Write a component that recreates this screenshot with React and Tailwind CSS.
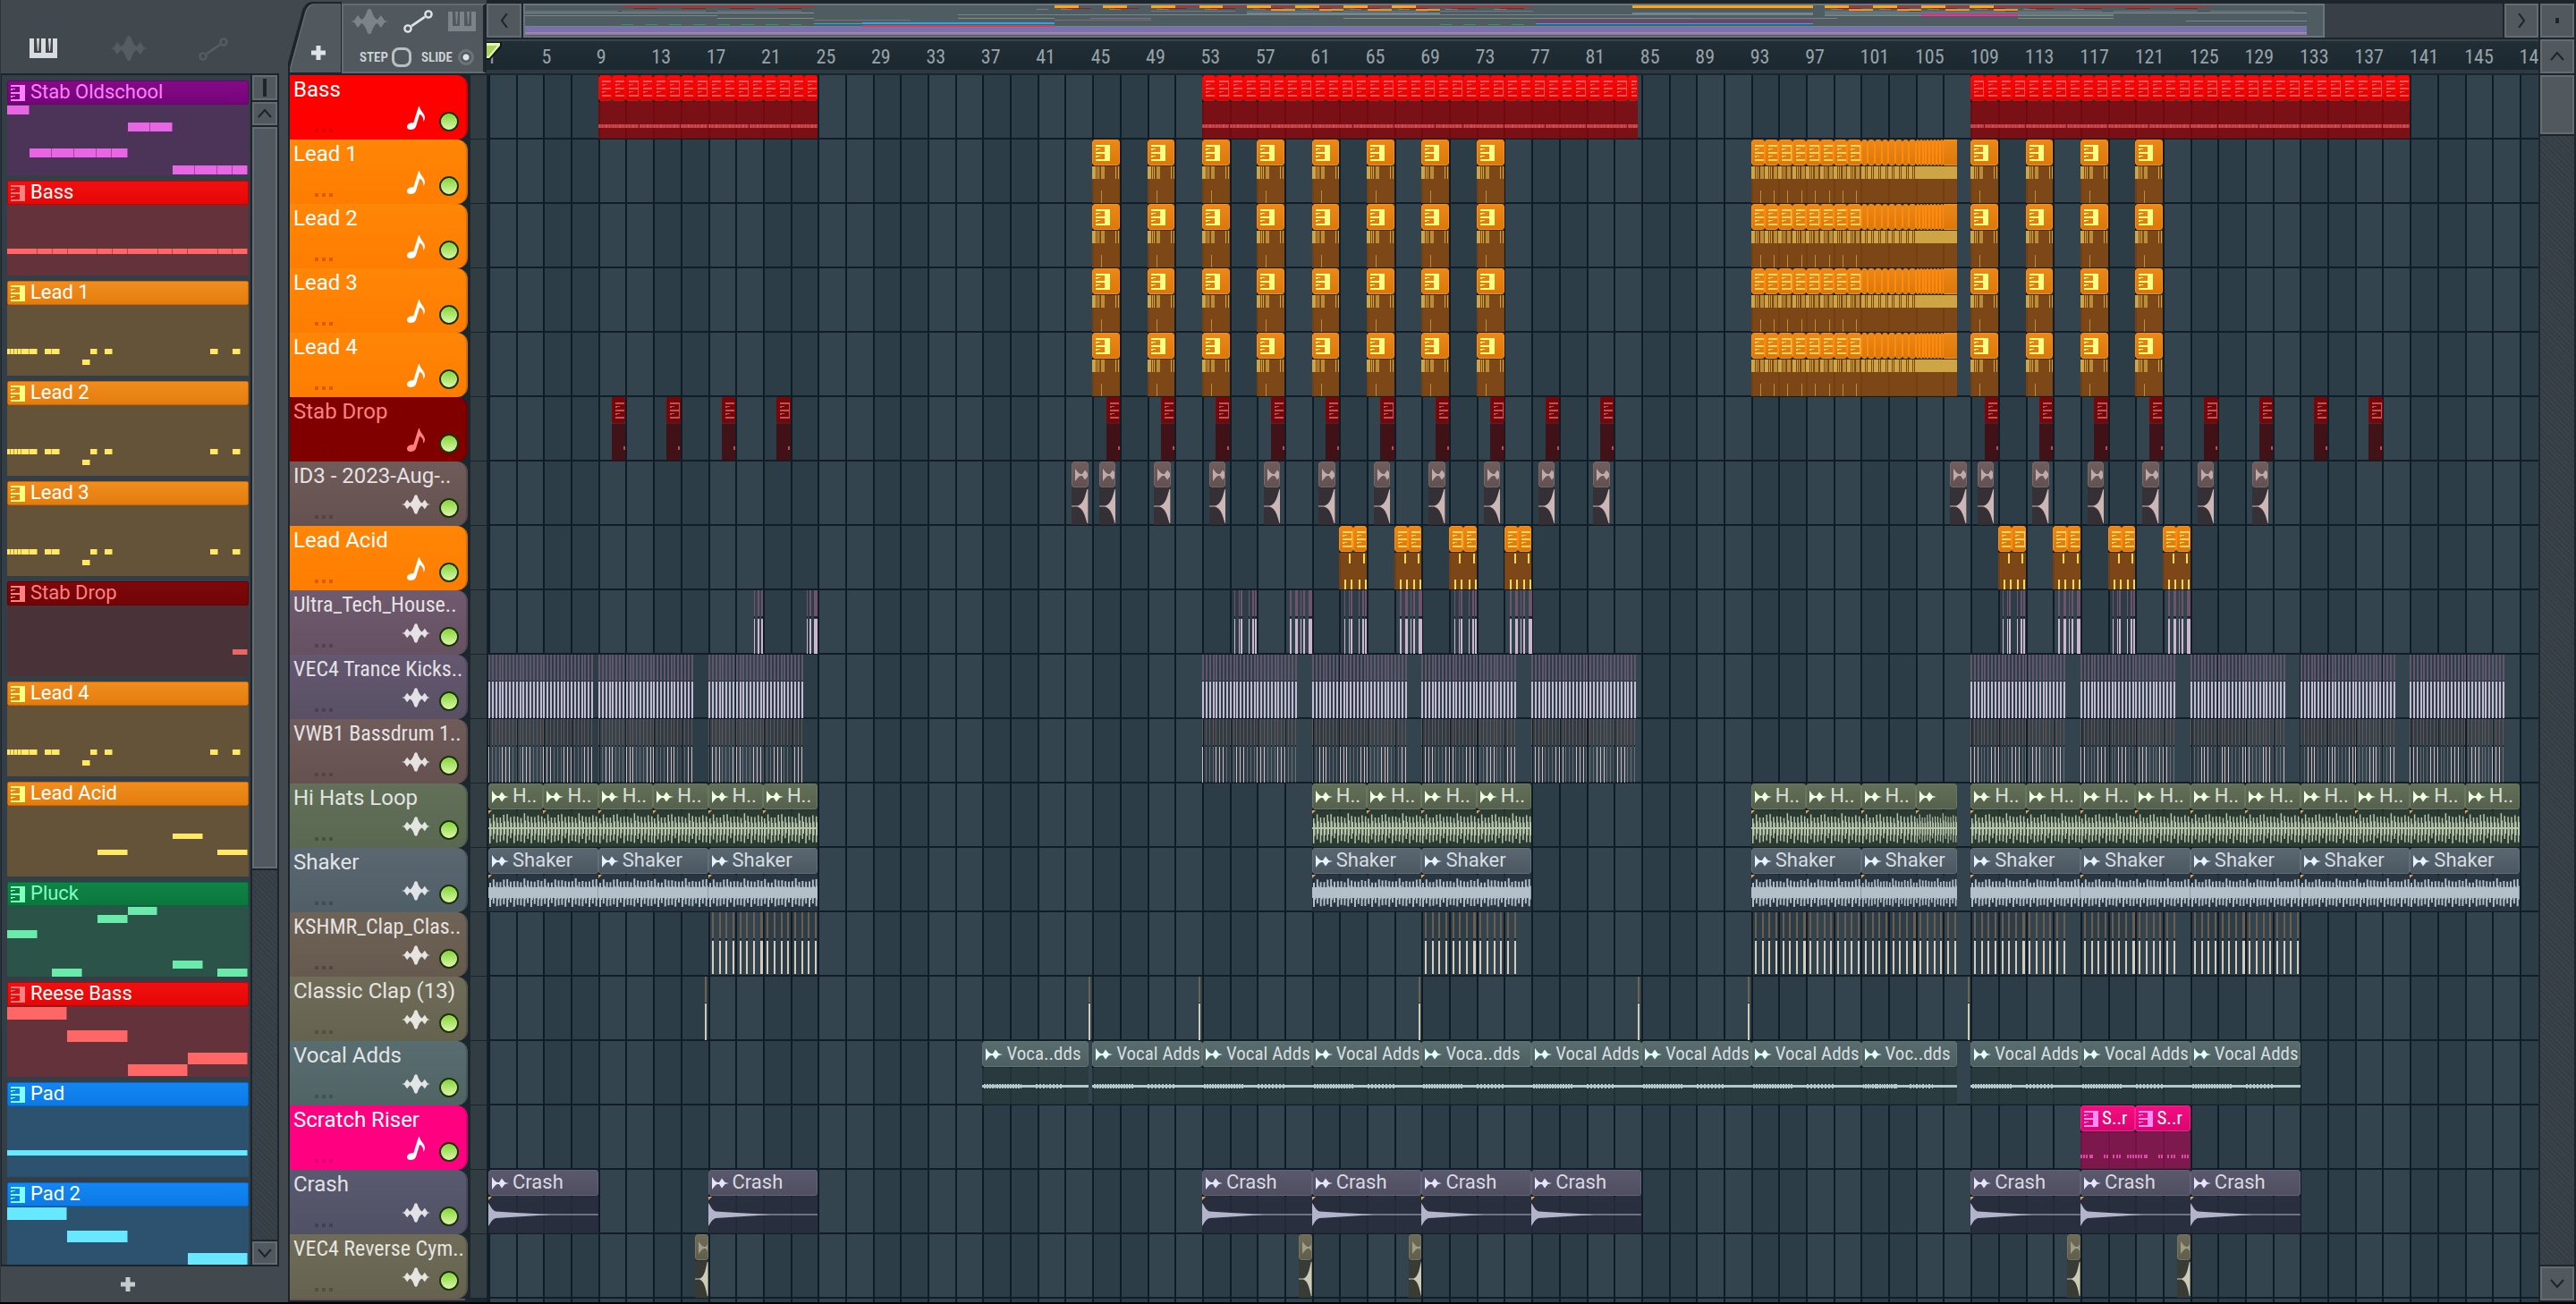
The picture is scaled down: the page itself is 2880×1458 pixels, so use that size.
import React, { useState } from "react";
import clsx from "clsx";

// Bars that fit in the visible part of the timeline
const SPAN = 149.36;
const at = (bar) => `${((bar - 1) / SPAN) * 100}%`;
const wide = (bars) => `${(bars / SPAN) * 100}%`;

// [first, first + step, ... last]
const every = (first, last, step) => {
  const out = [];
  for (let b = first; b <= last + 0.001; b += step) out.push(b);
  return out;
};

const FONT = "font-[family-name:'Roboto','Liberation_Sans',sans-serif]";
const TIGHT =
  "font-[family-name:'Roboto_Condensed','Liberation_Sans_Narrow','Roboto',sans-serif]";

// Colours for track heads, clips and picker entries
const LOOKS = {
  bass: {
    track: "bg-[#ff0000] text-white",
    dot: "bg-[#d90000]",
    head: "bg-linear-to-b from-[#f50e0e] to-[#dc0202] border-[#ff0000]",
    body: "bg-[#95060b]/75",
    icon: "text-[#ff7d7d]",
    ink: "text-white",
    note: "#d54b50",
  },
  lead: {
    track: "bg-linear-to-b from-[#ff8608] to-[#ff7d00] text-white",
    dot: "bg-[#d95a00]",
    head: "bg-linear-to-b from-[#ea8819] to-[#dd7808] border-[#ff8a0c]",
    body: "bg-[#994d0b]/75",
    icon: "text-[#ffff86]",
    ink: "text-white",
    note: "#cda544",
  },
  stab: {
    track: "bg-[#800000] text-[#ff8080]",
    dot: "bg-[#740000]",
    head: "bg-[#76060a] border-[#8d0000]",
    body: "bg-[#470a0f]/80",
    icon: "text-[#d98282]",
    ink: "text-[#ff8080]",
    note: "#c24a50",
  },
  brown: {
    track: "bg-linear-to-b from-[#6f5b5a] to-[#655150] text-[#e6e2e1]",
    dot: "bg-[#544342]",
    head: "bg-linear-to-b from-[#705d5d] to-[#645050] border-[#7a6665]",
    body: "bg-[#3a3036]/80",
    icon: "text-[#ead8d8]",
    ink: "text-[#e6e2e1]",
    note: "#cdb6b6",
  },
  plum: {
    track: "bg-linear-to-b from-[#6f5a6e] to-[#665163] text-[#e6e1e5]",
    dot: "bg-[#534151]",
    note: "#cdb6cb",
  },
  violet: {
    track: "bg-linear-to-b from-[#63586f] to-[#5a5066] text-[#e3e1e6]",
    dot: "bg-[#494055]",
    note: "#c4bad1",
  },
  green: {
    track: "bg-linear-to-b from-[#626f59] to-[#5a6751] text-[#e2e5e0]",
    dot: "bg-[#475340]",
    head: "bg-linear-to-b from-[#626f59] to-[#55614c] border-[#6a7760]",
    body: "bg-[#2e3e30]/80",
    icon: "text-[#efffdf]",
    ink: "text-[#d9dfd5]",
    note: "#b9c7ad",
  },
  slate: {
    track: "bg-linear-to-b from-[#5a6771] to-[#505e68] text-[#e1e4e6]",
    dot: "bg-[#404d57]",
    head: "bg-linear-to-b from-[#5a6771] to-[#4c5861] border-[#626f78]",
    body: "bg-[#2a3843]/80",
    icon: "text-[#e2f3ff]",
    ink: "text-[#d6dde2]",
    note: "#b3c0c9",
  },
  tan: {
    track: "bg-linear-to-b from-[#6f6358] to-[#665a4f] text-[#e6e3e0]",
    dot: "bg-[#534840]",
    note: "#d6cabc",
  },
  olive: {
    track: "bg-linear-to-b from-[#6f6c59] to-[#656250] text-[#e6e5e0]",
    dot: "bg-[#53503f]",
    head: "bg-linear-to-b from-[#6f6b59] to-[#625e4c] border-[#77735f]",
    body: "bg-[#3a3d34]/90",
    icon: "text-[#bdbba6]",
    ink: "text-[#e6e5e0]",
    note: "#cdcab5",
  },
  teal: {
    track: "bg-linear-to-b from-[#596c6f] to-[#506365] text-[#e0e5e6]",
    dot: "bg-[#405254]",
    head: "bg-linear-to-b from-[#596c6e] to-[#4d5f61] border-[#60726f]",
    body: "bg-[#2b3f42]/70",
    icon: "text-[#e0ffff]",
    ink: "text-[#d6dfe0]",
    note: "#b3c8c8",
  },
  pink: {
    track: "bg-[#ff0080] text-white",
    dot: "bg-[#dc0070]",
    head: "bg-linear-to-b from-[#f00f80] to-[#e00272] border-[#ff1f8e]",
    body: "bg-[#991053]/75",
    icon: "text-[#ff8cf6]",
    ink: "text-white",
    note: "#d94aa6",
  },
  indigo: {
    track: "bg-linear-to-b from-[#595a6f] to-[#505165] text-[#e1e1e6]",
    dot: "bg-[#404155]",
    head: "bg-linear-to-b from-[#5a586c] to-[#504e61] border-[#63617a]",
    body: "bg-[#2b2e40]/80",
    icon: "text-[#e4e4ff]",
    ink: "text-[#d9d9e2]",
    note: "#b3b4cb",
  },
};

/* ---------- icons ---------- */

const Piano = ({ className }) => (
  <svg viewBox="0 0 31 22" className={className} fill="currentColor">
    <path d="M0 0h5v16h8V0h5v16h8V0h5v22H0z" />
    <path d="M8 0h3l-1 14H9zM21 0h3l-1 14h-1z" />
  </svg>
);

// The same keyboard turned on its side, for pattern clips
const Keys = ({ className }) => (
  <svg
    viewBox="0 0 16 18"
    className={className}
    fill="currentColor"
    shapeRendering="crispEdges"
  >
    <path d="M0 0h16v18H0v-2h10v-6H0V8h10V2H0z" />
    <path d="M0 4h5v1H2v1H0zM0 12h5v1H2v1H0z" />
  </svg>
);

const Wave = ({ className }) => (
  <svg viewBox="0 0 42 28" className={className} fill="currentColor">
    <path d="M0 14l4-1 4-6 4 5c3-1 5-5 7-11q2-2 4 0c2 6 4 10 7 11l4-5 4 6 4 1-4 1-4 6-4-5c-3 1-5 5-7 11q-2 2-4 0c-2-6-4-10-7-11l-4 5-4-6z" />
  </svg>
);

const ClipWave = ({ className }) => (
  <svg viewBox="0 0 19 14" className={className} fill="currentColor">
    <path d="M0 0c2 2 3 5 6 6h2l3-4.500L14.500 6 19 7l-4.500 1-3.500 4.500L8 8H6c-3 1-4 4-6 6z" />
  </svg>
);

const Automation = ({ className }) => (
  <svg
    viewBox="0 0 33 26"
    className={className}
    fill="none"
    stroke="currentColor"
    strokeWidth="2.4"
  >
    <circle cx="5" cy="21" r="3.6" />
    <circle cx="28" cy="5" r="3.6" />
    <path d="M9 18.2L24 7.8" strokeWidth="2.8" />
  </svg>
);

const Note = ({ className }) => (
  <svg viewBox="0 0 20 26" className={className} fill="currentColor">
    <path d="M13 0h1c.4 5 6 7.500 6 12.500 0 2-.8 3.400-1.800 4.300.4-4-.9-6.600-4-8L10 22.500C9.200 25 6.500 26 4 26c-2.600 0-4-1.600-4-3.600.3-2.600 3.400-4.300 7.200-4z" />
  </svg>
);

const Plus = ({ className }) => (
  <svg viewBox="0 0 16 16" className={className} fill="currentColor">
    <path d="M5.500 0h5v5.500H16v5h-5.500V16h-5v-5.500H0v-5h5.500z" />
  </svg>
);

const Chevron = ({ d }) => (
  <svg
    viewBox="0 0 16 16"
    className="size-4"
    fill="none"
    stroke="#1c252b"
    strokeWidth="2"
  >
    <path d={d} />
  </svg>
);
const UP = "M1 12L8 4l7 8";
const DOWN = "M1 4l7 8 7-8";
const LEFT = "M11 0L5 8l6 8";
const RIGHT = "M5 0l6 8-6 8";

const StepButton = ({ d, label, className }) => (
  <button
    aria-label={label}
    className={clsx(
      "flex shrink-0 items-center justify-center border-2 border-[#646c72] bg-[#51595f]",
      className,
    )}
  >
    <Chevron d={d} />
  </button>
);

/* ---------- picker ---------- */

const LEAD_NOTES = [
  [0, 4, 49, 6],
  [4, 4, 49, 6],
  [8, 4, 49, 6],
  [12, 4, 49, 6],
  [16, 9, 49, 6],
  [25, 9, 49, 6],
  [42, 8, 49, 6],
  [50, 9, 49, 6],
  [84, 9, 61, 6],
  [93, 8, 49, 6],
  [109, 9, 49, 6],
  [227, 9, 49, 6],
  [252, 9, 49, 6],
];

// notes: [x, width, y, height] inside a 270 x 79 preview
const PATTERNS = [
  {
    name: "Stab Oldschool",
    head: "bg-linear-to-b from-[#830b85] to-[#75047a] border-[#6b0070] text-[#ff80ff]",
    body: "bg-[#4c3459]",
    note: "#e866e6",
    notes: [
      [0, 25, 1, 10],
      [25, 25, 49, 10],
      [50, 25, 49, 10],
      [75, 25, 49, 10],
      [100, 17, 49, 10],
      [117, 18, 49, 10],
      [135, 25, 20, 10],
      [160, 25, 20, 10],
      [185, 25, 68, 10],
      [210, 25, 68, 10],
      [235, 17, 68, 10],
      [252, 17, 68, 10],
    ],
  },
  {
    name: "Bass",
    head: "bg-linear-to-b from-[#f11010] to-[#e60606] border-[#c80000] text-white",
    icon: "text-[#ff8080]",
    body: "bg-[#64323a]",
    note: "#ff6767",
    notes: [
      [0, 34, 49, 6],
      [34, 17, 49, 6],
      [51, 17, 49, 6],
      [68, 33, 49, 6],
      [101, 17, 49, 6],
      [118, 17, 49, 6],
      [135, 34, 49, 6],
      [169, 16, 49, 6],
      [185, 17, 49, 6],
      [202, 34, 49, 6],
      [236, 16, 49, 6],
      [252, 17, 49, 6],
    ],
  },
  { name: "Lead 1", lead: true, notes: LEAD_NOTES },
  { name: "Lead 2", lead: true, notes: LEAD_NOTES },
  { name: "Lead 3", lead: true, notes: LEAD_NOTES },
  {
    name: "Stab Drop",
    head: "bg-linear-to-b from-[#7e080b] to-[#720507] border-[#640000] text-[#ff8080]",
    body: "bg-[#4a3239]",
    note: "#e86667",
    notes: [[252, 17, 49, 6]],
  },
  { name: "Lead 4", lead: true, notes: LEAD_NOTES },
  {
    name: "Lead Acid",
    lead: true,
    notes: [
      [101, 34, 49, 6],
      [185, 34, 31, 6],
      [235, 34, 49, 6],
    ],
  },
  {
    name: "Pluck",
    head: "bg-linear-to-b from-[#118347] to-[#0a783e] border-[#046a34] text-[#7fffbf]",
    body: "bg-[#2c5348]",
    note: "#6aebab",
    notes: [
      [0, 34, 27, 9],
      [50, 34, 70, 9],
      [101, 34, 10, 9],
      [135, 33, 1, 9],
      [185, 34, 61, 9],
      [235, 34, 70, 9],
    ],
  },
  {
    name: "Reese Bass",
    head: "bg-linear-to-b from-[#f11010] to-[#e60606] border-[#c80000] text-white",
    icon: "text-[#ff8080]",
    body: "bg-[#64323a]",
    note: "#ff6767",
    notes: [
      [0, 67, 1, 14],
      [67, 68, 27, 13],
      [135, 67, 65, 13],
      [202, 67, 52, 13],
    ],
  },
  {
    name: "Pad",
    head: "bg-linear-to-b from-[#1386f3] to-[#0c7ae6] border-[#0069d6] text-white",
    icon: "text-[#80ffff]",
    body: "bg-[#2c5270]",
    note: "#67e8ff",
    notes: [[0, 269, 49, 6]],
  },
  {
    name: "Pad 2",
    head: "bg-linear-to-b from-[#1386f3] to-[#0c7ae6] border-[#0069d6] text-white",
    icon: "text-[#80ffff]",
    body: "bg-[#2c5270]",
    note: "#67e8ff",
    notes: [
      [0, 67, 1, 14],
      [67, 68, 27, 13],
      [202, 67, 52, 13],
    ],
  },
];

const LEAD_PATTERN = {
  head: "bg-linear-to-b from-[#f08d1e] to-[#e37d0c] border-[#d26300] text-white",
  icon: "text-[#ffff80]",
  body: "bg-[#645239]",
  note: "#ffe866",
};

const PatternCard = ({ pattern }) => {
  const p = pattern.lead ? { ...LEAD_PATTERN, ...pattern } : pattern;
  return (
    <li className="h-[106px] shrink-0">
      <div
        className={clsx(
          "flex h-[27px] items-center gap-[6px] rounded-[2px] border pl-[3px]",
          p.head,
        )}
      >
        <Keys className={clsx("h-[18px] w-4", p.icon)} />
        <span className="pb-[2px] text-[22px] leading-6">{p.name}</span>
      </div>
      <svg
        viewBox="0 0 270 79"
        preserveAspectRatio="none"
        className={clsx("h-[79px] w-full", p.body)}
        shapeRendering="crispEdges"
      >
        {p.notes.map(([x, w, y, h], i) => (
          <g key={i}>
            <rect x={x} y={y} width={w} height={h} fill={p.note} />
            <rect
              x={x + w - 1}
              y={y}
              width={1}
              height={h}
              fill="#000"
              opacity="0.3"
            />
          </g>
        ))}
      </svg>
    </li>
  );
};

const Picker = () => (
  <aside className="flex w-[312px] shrink-0 flex-col border-l border-[#2b343a]">
    <div className="grid h-[82px] w-[285px] grid-cols-3 items-end justify-items-center pb-[14px]">
      <button aria-label="Patterns" className="pb-[3px] text-[#d8dcdf]">
        <Piano className="h-[22px] w-[31px]" />
      </button>
      <button aria-label="Audio clips" className="text-[#545d62]">
        <Wave className="h-7 w-[42px]" />
      </button>
      <button aria-label="Automation clips" className="text-[#545d62]">
        <Automation className="h-[26px] w-[33px]" />
      </button>
    </div>

    <div className="flex min-h-0 flex-1 border-2 border-l border-[#1c252b]">
      <ul className="flex min-w-0 flex-1 flex-col gap-[6px] overflow-hidden bg-[#333e47] pt-[6px] pr-[2px] pl-[6px]">
        {PATTERNS.map((p) => (
          <PatternCard key={p.name} pattern={p} />
        ))}
      </ul>
      <div className="flex w-[30px] shrink-0 flex-col gap-[2px] border-l-2 border-[#1c252b] bg-[#1c252b]">
        <button
          aria-label="Panel options"
          className="flex h-7 items-center justify-center border-2 border-[#646c72] bg-[#51595f]"
        >
          <span className="h-5 w-1 bg-[#1c252b]" />
        </button>
        <StepButton d={UP} label="Scroll up" className="h-[26px]" />
        <div className="grow-[2] basis-0 border-2 border-[#646c72] bg-[#51585f]" />
        <div className="grow basis-0 bg-[repeating-linear-gradient(45deg,#343c44_0_2px,#3b434a_2px_4px)]" />
        <StepButton d={DOWN} label="Scroll down" className="h-[26px]" />
      </div>
    </div>

    <button
      aria-label="Add pattern"
      className="flex h-10 w-[284px] shrink-0 items-center justify-center text-[#c6cbce]"
    >
      <Plus className="size-4" />
    </button>
  </aside>
);

/* ---------- clips ---------- */

const Clip = ({
  start,
  len,
  look,
  label,
  audio,
  cue,
  plain,
  tight,
  children,
}) => {
  const l = LOOKS[look];
  const narrow = len < 1.5;
  return (
    <div
      className="absolute top-0 flex h-[71px] flex-col bg-black/20"
      style={{ left: at(start), width: wide(len) }}
    >
      <div
        className={clsx(
          "flex h-[29px] shrink-0 items-center overflow-hidden border",
          plain ? "border-x-0" : "rounded-[3px]",
          l.head,
        )}
      >
        {len > 0.7 && !plain && (
          <span
            className={clsx(
              "ml-[3px] shrink-0",
              l.icon,
              narrow && "opacity-65",
            )}
          >
            {audio ? (
              <ClipWave className="h-[14px] w-[19px]" />
            ) : (
              <Keys className="h-[18px] w-4" />
            )}
          </span>
        )}
        {label && (
          <span
            className={clsx(
              "ml-1 shrink-0 pb-[2px] leading-6 whitespace-nowrap",
              tight ? [TIGHT, "text-[21px]"] : "text-[22px]",
              l.ink,
            )}
          >
            {label}
          </span>
        )}
      </div>
      <div
        className={clsx(
          "relative mt-px min-h-0 flex-1 overflow-hidden",
          l.body,
        )}
      >
        {children}
        {cue && (
          <svg viewBox="0 0 4 4" className="absolute top-0 left-0 size-1">
            <path d="M0 0h4L0 4z" fill="#e8a25c" />
          </svg>
        )}
      </div>
    </div>
  );
};

// Preview notes; the viewBox is w x 41
const Notes = ({ w, rects, color }) => (
  <svg
    viewBox={`0 0 ${w} 41`}
    preserveAspectRatio="none"
    className="h-full w-full"
    shapeRendering="crispEdges"
  >
    {rects.map(([x, y, rw, h, dim], i) => (
      <rect
        key={i}
        x={x}
        y={y}
        width={rw}
        height={h}
        fill={color}
        opacity={dim ? 0.75 : 1}
      />
    ))}
  </svg>
);

const Shape = ({ w, d, color, crisp }) => (
  <svg
    viewBox={`0 0 ${w} 41`}
    preserveAspectRatio="none"
    className="h-full w-full"
    shapeRendering={crisp ? "crispEdges" : "auto"}
  >
    <path d={d} fill={color} />
  </svg>
);

const BassLane = () =>
  [...every(9, 24, 1), ...every(53, 84, 1), ...every(109, 140, 1)].map((b) => (
    <Clip key={b} start={b} len={b === 84 ? 0.75 : 1} look="bass">
      <Notes
        w={15}
        color={LOOKS.bass.note}
        rects={[
          [0, 25, 15, 4, true],
          [1, 25, 1, 4],
          [4, 25, 1, 4],
          [8, 25, 2, 4],
          [12, 25, 1, 4],
        ]}
      />
    </Clip>
  ));

const RIFF = [
  [0, 0, 4, 14],
  [5, 0, 1, 14],
  [7, 0, 1, 14],
  [10, 0, 4, 14, true],
  [26, 0, 1, 14],
  [29, 0, 1, 14],
  [10, 27, 1, 14, true],
];

const LeadLane = () => (
  <>
    {[...every(45, 73, 4), ...every(109, 121, 4)].map((b) => (
      <Clip key={b} start={b} len={2} look="lead">
        <Notes w={31} color={LOOKS.lead.note} rects={RIFF} />
      </Clip>
    ))}
    {every(93, 100, 1).map((b) => (
      <Clip key={b} start={b} len={1} look="lead">
        <Notes w={15} color={LOOKS.lead.note} rects={RIFF} />
      </Clip>
    ))}
    {/* the roll: half bars, then quarters, then one solid bar */}
    {every(101, 104.5, 0.5).map((b) => (
      <Clip key={b} start={b} len={0.5} look="lead">
        <Notes
          w={8}
          color={LOOKS.lead.note}
          rects={[
            [0, 0, 4, 14],
            [5, 0, 1, 14],
            [7, 0, 1, 14],
          ]}
        />
      </Clip>
    ))}
    {every(105, 106.75, 0.25).map((b) => (
      <Clip key={b} start={b} len={0.25} look="lead">
        <Notes w={4} color={LOOKS.lead.note} rects={[[0, 0, 4, 14]]} />
      </Clip>
    ))}
    <Clip start={107} len={1} look="lead" plain>
      <Notes w={15} color={LOOKS.lead.note} rects={[[0, 0, 15, 14]]} />
    </Clip>
  </>
);

const StabLane = () =>
  [...every(10, 22, 4), ...every(46, 82, 4), ...every(110, 138, 4)].map(
    (b) => (
      <Clip key={b} start={b} len={1} look="stab">
        <Notes w={15} color={LOOKS.stab.note} rects={[[13, 25, 2, 4]]} />
      </Clip>
    ),
  );

const SWELL =
  "M0 19.500H6C10 19 13 15 15 8L17 1h1v38h-1L15 32C13 25 10 21.500 6 20.500H0z";

const RiserLane = () =>
  [
    43.5,
    ...every(45.5, 81.5, 4),
    107.5,
    ...every(109.5, 129.5, 4),
  ].map((b) => (
    <Clip key={b} start={b} len={1.2} look="brown" audio>
      <Shape w={18} d={SWELL} color={LOOKS.brown.note} />
    </Clip>
  ));

const AcidLane = () =>
  [...every(63, 75, 4), ...every(111, 123, 4)].flatMap((b) =>
    [b, b + 1].map((bar) => (
      <Clip key={bar} start={bar} len={1} look="lead">
        <Notes
          w={15}
          color="#f3da55"
          rects={[
            [11, 1, 2, 11],
            [6, 30, 2, 11],
            [13, 30, 2, 11],
          ]}
        />
      </Clip>
    )),
  );

// One-shot samples drawn as slivers. hits: [x, width] in pixels at default zoom
const Slivers = ({ start, w, hits, head, note, top = 32, bottom = 71 }) => (
  <svg
    viewBox={`0 0 ${w} 72`}
    preserveAspectRatio="none"
    className="absolute top-0 h-[72px]"
    style={{ left: at(start), width: wide(w / 15.345) }}
    shapeRendering="crispEdges"
  >
    {hits.map(([x, hw, alpha = 1], i) => (
      <g key={i}>
        <rect x={x} y={0} width={hw} height={29} fill={head} />
        <rect x={x} y={29} width={hw} height={2} fill="#1c2228" />
        <rect
          x={x}
          y={top}
          width={hw}
          height={bottom - top}
          fill={note}
          opacity={alpha}
        />
      </g>
    ))}
  </svg>
);

const HITS_A = [
  [0, 1],
  [5, 1],
  [7, 2],
  [16, 1],
  [20, 2],
  [23, 2],
];
const HITS_B = [
  [0, 2],
  [6, 3],
  [12, 1],
  [15, 2],
  [21, 4],
];

const TechLane = () => (
  <>
    <Slivers
      start={20.35}
      w={10}
      hits={[
        [0, 1],
        [4, 2],
        [8, 2],
      ]}
      head="#6f5368"
      note={LOOKS.plum.note}
    />
    <Slivers
      start={24.2}
      w={12}
      hits={[
        [0, 1],
        [3, 2],
        [8, 4],
      ]}
      head="#6f5368"
      note={LOOKS.plum.note}
    />
    {[55.35, 63.35, 71.35, 111.35, 119.35].map((b) => (
      <Slivers
        key={b}
        start={b}
        w={25}
        hits={HITS_A}
        head="#6f5368"
        note={LOOKS.plum.note}
      />
    ))}
    {[59.39, 67.39, 75.39, 115.39, 123.39].map((b) => (
      <Slivers
        key={b}
        start={b}
        w={25}
        hits={HITS_B}
        head="#6f5368"
        note={LOOKS.plum.note}
      />
    ))}
  </>
);

// [start bar, number of kicks, accent shift]
const KICKS = [
  [1, 31, 2],
  [9, 28, 4],
  [17, 28, 5],
  [53, 28, 2],
  [61, 28, 4],
  [69, 28, 5],
  [77, 31, 5],
  [109, 28, 0],
  [117, 28, 1],
  [125, 28, 3],
  [133, 28, 4],
  [141, 28, 0],
];
const BEAT = 15.345 / 4;

const KickLane = () =>
  KICKS.map(([b, n]) => (
    <Slivers
      key={b}
      start={b}
      w={Math.round(n * BEAT)}
      hits={Array.from({ length: n }, (_, i) => [Math.round(i * BEAT), 2])}
      head="#62566c"
      note={LOOKS.violet.note}
      top={30}
    />
  ));

const BassdrumLane = () =>
  KICKS.map(([b, n, shift]) => (
    <Slivers
      key={b}
      start={b}
      w={Math.round(n * BEAT)}
      hits={Array.from({ length: n }, (_, i) => [
        Math.round(i * BEAT),
        1,
        (i + shift) % 6 < 3 ? 1 : 0.35,
      ])}
      head="#6b5350"
      note="#d3bcbb"
      top={31}
    />
  ));

const clapHits = (bars) => {
  const out = [];
  for (let i = 0; i < bars * 2; i++) out.push([4 + i * 7.672, 2]);
  out.push([60, 1]);
  return out;
};

const ClapLane = () =>
  [
    [17, 8],
    [69, 7],
    [93, 8],
    [101, 7],
    [109, 7],
    [117, 7],
    [125, 8],
  ].map(([b, n]) => (
    <Slivers
      key={b}
      start={b}
      w={Math.round(n * 15.345)}
      hits={clapHits(n)}
      head="#6b5d50"
      note={LOOKS.tan.note}
      bottom={69}
    />
  ));

const ClassicLane = () =>
  [16.77, 44.75, 52.75, 68.8, 84.75, 92.75, 108.8].map((b) => (
    <Slivers
      key={b}
      start={b}
      w={2}
      hits={[[0, 2]]}
      head="#6b6551"
      note={LOOKS.olive.note}
      top={30}
    />
  ));

// Peaks on every beat around the middle of the clip
const peaks = (w, base, low, high, pw) => {
  let d = `M0 ${20 - base}H${w}V${20 + base}H0z`;
  for (let i = 0; i * BEAT < w; i++) {
    const x = i * BEAT + 1;
    const k = Math.abs(Math.sin(i * 1.7) * 0.6 + Math.sin(i * 0.45) * 0.4);
    const up = low + (high - low) * k;
    const dn = low + (high - low) * Math.abs(Math.cos(i * 1.3));
    d += `M${x} ${20 - up}h${pw}V${20 + dn}h${-pw}z`;
    d += `M${x + pw} ${20 - up / 2}h1V${20 + dn / 2}h-1z`;
  }
  return d;
};

const HAT_SHAPE = peaks(61, 1, 11, 17, 1.5);
const SHAKER_SHAPE = peaks(123, 6, 11, 16, 2);

const HatLane = () =>
  [
    ...every(1, 21, 4),
    ...every(61, 73, 4),
    ...every(93, 105, 4),
    ...every(109, 145, 4),
  ].map((b) => (
    <Clip
      key={b}
      start={b}
      len={b === 105 ? 3 : 4}
      look="green"
      label={b === 105 ? null : "H.."}
      audio
      cue
    >
      <Shape w={61} d={HAT_SHAPE} color={LOOKS.green.note} />
    </Clip>
  ));

const ShakerLane = () =>
  [1, 9, 17, 61, 69, 93, 101, 109, 117, 125, 133, 141].map((b) => (
    <Clip
      key={b}
      start={b}
      len={b === 101 ? 7 : 8}
      look="slate"
      label="Shaker"
      audio
      cue
    >
      <Shape w={123} d={SHAKER_SHAPE} color={LOOKS.slate.note} />
    </Clip>
  ));

const VOCALS = [
  [37, 7.75, "Voca..dds"],
  [45, 8, "Vocal Adds"],
  [53, 8, "Vocal Adds"],
  [61, 8, "Vocal Adds"],
  [69, 8, "Voca..dds"],
  [77, 8, "Vocal Adds"],
  [85, 8, "Vocal Adds"],
  [93, 8, "Vocal Adds"],
  [101, 7, "Voc..dds"],
  [109, 8, "Vocal Adds"],
  [117, 8, "Vocal Adds"],
  [125, 8, "Vocal Adds"],
];

const VOCAL_SHAPE =
  "M0 19H123V22H0z" +
  every(2, 46, 3)
    .map((x) => `M${x} 18h2v5h-2z`)
    .join("") +
  every(62, 90, 4)
    .map((x) => `M${x} 18h2v5h-2z`)
    .join("");

const VocalLane = () =>
  VOCALS.map(([b, len, label]) => (
    <Clip key={b} start={b} len={len} look="teal" label={label} audio tight>
      <Shape w={123} d={VOCAL_SHAPE} color={LOOKS.teal.note} crisp />
    </Clip>
  ));

const ScratchLane = () =>
  [117, 121].map((b) => (
    <Clip key={b} start={b} len={4} look="pink" label="S..r" tight>
      <Notes
        w={61}
        color={LOOKS.pink.note}
        rects={[0, 3, 6, 10, 12, 26, 29, 36, 40, 43, 52, 55, 58].map((x) => [
          x,
          25,
          2,
          4,
        ])}
      />
    </Clip>
  ));

const CRASH_SHAPE =
  "M0 7C2 9 3 14 8 16.500L16 17 32 18 56 19.200 70 19.600H123V20.600H70L56 21 32 22.500 16 23.500 8 24C3 26 2 31 0 33z";

const CrashLane = () =>
  [1, 17, 53, 61, 69, 77, 109, 117, 125].map((b) => (
    <Clip key={b} start={b} len={8} look="indigo" label="Crash" audio cue>
      <Shape w={123} d={CRASH_SHAPE} color={LOOKS.indigo.note} />
    </Clip>
  ));

const ReverseLane = () =>
  [16.05, 60.05, 68.05, 116.05, 124.05].map((b) => (
    <Clip key={b} start={b} len={0.95} look="olive" audio>
      <Shape w={18} d={SWELL} color={LOOKS.olive.note} />
    </Clip>
  ));

/* ---------- tracks ---------- */

const TRACKS = [
  { name: "Bass", look: "bass", midi: true, Lane: BassLane },
  { name: "Lead 1", look: "lead", midi: true, Lane: LeadLane },
  { name: "Lead 2", look: "lead", midi: true, Lane: LeadLane },
  { name: "Lead 3", look: "lead", midi: true, Lane: LeadLane },
  { name: "Lead 4", look: "lead", midi: true, Lane: LeadLane },
  { name: "Stab Drop", look: "stab", midi: true, Lane: StabLane },
  { name: "ID3 - 2023-Aug-..", look: "brown", Lane: RiserLane },
  { name: "Lead Acid", look: "lead", midi: true, Lane: AcidLane },
  { name: "Ultra_Tech_House..", look: "plum", tight: true, Lane: TechLane },
  { name: "VEC4 Trance Kicks..", look: "violet", tight: true, Lane: KickLane },
  { name: "VWB1 Bassdrum 1..", look: "brown", tight: true, Lane: BassdrumLane },
  { name: "Hi Hats Loop", look: "green", Lane: HatLane },
  { name: "Shaker", look: "slate", Lane: ShakerLane },
  { name: "KSHMR_Clap_Clas..", look: "tan", tight: true, Lane: ClapLane },
  { name: "Classic Clap (13)", look: "olive", Lane: ClassicLane },
  { name: "Vocal Adds", look: "teal", Lane: VocalLane },
  { name: "Scratch Riser", look: "pink", midi: true, Lane: ScratchLane },
  { name: "Crash", look: "indigo", Lane: CrashLane },
  { name: "VEC4 Reverse Cym..", look: "olive", tight: true, Lane: ReverseLane },
];

const TrackHead = ({ track, on, onToggle }) => {
  const l = LOOKS[track.look];
  return (
    <div className="flex h-[72px] shrink-0">
      <div
        className={clsx(
          "flex w-[199px] flex-col rounded-r-[12px] border-r-2 border-black/15",
          l.track,
        )}
      >
        <span
          className={clsx(
            "h-8 pl-1 text-[24px] leading-8 whitespace-nowrap",
            track.tight && TIGHT,
          )}
        >
          {track.name}
        </span>
        <div className="flex h-10 items-center justify-end pr-2">
          <span className="mr-auto mb-2 ml-7 flex gap-1 self-end">
            <i className={clsx("size-1", l.dot)} />
            <i className={clsx("size-1", l.dot)} />
            <i className={clsx("size-1", l.dot)} />
          </span>
          <span className="mr-[10px] mb-2 flex w-8 justify-center">
            {track.midi ? (
              <Note className="h-[26px] w-5" />
            ) : (
              <Wave className="h-6 w-8" />
            )}
          </span>
          <input
            type="checkbox"
            aria-label={`${track.name} on`}
            checked={on}
            onChange={onToggle}
            className="size-[22px] appearance-none rounded-full border-2 border-[#1d3306] bg-[#39402f] ring-1 ring-white/30 ring-inset checked:bg-linear-to-b checked:from-[#7fd624] checked:to-[#dcf5a6]"
          />
        </div>
      </div>
      <div className="w-[3px] bg-[#1b272e]" />
      <div className="w-[18px] border-b border-[#18242b] bg-[#323d43]" />
    </div>
  );
};

const Grid = () => (
  <div className="absolute inset-0 flex overflow-hidden">
    {every(1, 149, 2).map((b) => (
      <div
        key={b}
        className={clsx(
          "shrink-0 border-l-2 border-[#0d1c26]",
          Math.floor((b - 1) / 4) % 2 ? "bg-[#2d3d47]" : "bg-[#33444e]",
        )}
        style={{ width: wide(2) }}
      />
    ))}
  </div>
);

/* ---------- overview map ---------- */

const leads = [...every(45, 73, 4), ...every(109, 121, 4)];
// [start, bars, y, height, class]
const MAP = [
  [1, 148, 24, 7, "bg-[#7c71b0]"],
  [1, 148, 23, 1, "bg-[#71877f]"],
  [1, 148, 30, 1, "bg-[#8d9b93]"],
  [1, 148, 31, 2, "bg-[#a571b0]"],
  [9, 16, 0, 1, "bg-[#e81a1a]"],
  [53, 31.7, 0, 1, "bg-[#e81a1a]"],
  [109, 32, 0, 1, "bg-[#e81a1a]"],
  ...leads.map((b) => [b, 2, 0, 3, "bg-[#ffa414]"]),
  [93, 15, 0, 3, "bg-[#ffa414]"],
  ...[10, 14, 18, 22, ...every(46, 82, 4), ...every(110, 138, 4)].map((b) => [
    b,
    2,
    3,
    1,
    "bg-[#9b1a1e]",
  ]),
  ...[43.5, ...every(45.5, 81.5, 4), ...every(109.5, 129.5, 4)].map((b) => [
    b,
    1,
    4,
    1,
    "bg-[#8c7877]",
  ]),
  ...[...every(63, 75, 4), ...every(111, 123, 4)].map((b) => [
    b,
    2,
    4,
    2,
    "bg-[#f09020]",
  ]),
  ...KICKS.map(([b, n]) => [b, n / 4, 6, 1, "bg-[#6f7a84]"]),
  [1, 24, 8, 1, "bg-[#829491]"],
  [61, 16, 8, 2, "bg-[#73868d]"],
  [93, 15, 8, 2, "bg-[#73868d]"],
  [109, 40, 8, 1, "bg-[#829491]"],
  [1, 16, 11, 1, "bg-[#74868d]"],
  [37, 71, 10, 1, "bg-[#70868a]"],
  [109, 24, 10, 2, "bg-[#70868a]"],
  [117, 8, 10, 2, "bg-[#ff2aa0]"],
  [17, 8, 14, 1, "bg-[#858f78]"],
  [25, 8, 16, 1, "bg-[#826d6e]"],
  [37, 8, 14, 1, "bg-[#858f78]"],
  [45, 8, 16, 1, "bg-[#826d6e]"],
  [48, 5, 14, 1, "bg-[#87708c]"],
  [69, 16, 14, 1, "bg-[#858f78]"],
  [85, 13, 14, 1, "bg-[#858f78]"],
  [98, 12, 14, 1, "bg-[#8c7c80]"],
  [125, 8, 14, 1, "bg-[#858f78]"],
  ...every(9, 23, 2).map((b) => [b, 1, 21, 1, "bg-[#2a9c68]"]),
  ...every(77, 83, 2).map((b) => [b, 1, 21, 1, "bg-[#2a9c68]"]),
  [25, 4, 20, 1, "bg-[#1cabf5]"],
  [29, 16, 19, 2, "bg-[#12b0ff]"],
  [29, 16, 22, 2, "bg-[#d9414a]"],
  [85, 23, 17, 2, "bg-[#86308a]"],
  [85, 23, 20, 1, "bg-[#12b0ff]"],
  [139, 10, 17, 1, "bg-[#7a80a0]"],
];

const Overview = () => (
  <div className="flex h-11 gap-[2px] border-b-2 border-[#1c252b] bg-[#1c252b] pt-1">
    <StepButton d={LEFT} label="Scroll left" className="w-[39px]" />
    <div className="flex min-w-0 flex-1 bg-[#383f47]">
      <div className="relative h-full w-[91%] overflow-hidden border-2 border-[#69757a] bg-[#4f5d63]">
        {MAP.map(([b, n, y, h, color], i) => (
          <div
            key={i}
            className={clsx("absolute", color)}
            style={{ left: at(b), width: wide(n), top: y, height: h }}
          />
        ))}
      </div>
    </div>
    <StepButton d={RIGHT} label="Scroll right" className="w-[38px]" />
  </div>
);

const Ruler = () => (
  <div
    className={clsx(
      "relative flex min-h-0 flex-1 overflow-hidden border-t-2 border-b-4 border-t-[#36434a] border-b-[#2d3a41] bg-linear-to-b from-[#222e35] to-[#1c282f]",
      TIGHT,
    )}
  >
    {every(1, 149, 4).map((b) => (
      <span
        key={b}
        className="shrink-0 pt-[2px] text-[22px] leading-8 whitespace-nowrap text-[#98a3a9]"
        style={{ width: wide(4) }}
      >
        {b}
      </span>
    ))}
    <svg viewBox="0 0 17 20" className="absolute top-[1px] left-0 h-5 w-[17px]">
      <path d="M0 0h17v5L4 20H0z" fill="#10181c" />
      <path d="M0 1h15v3L3 18H0z" fill="#e5f5b4" />
      <path d="M0 4h12L2 16H0z" fill="#a9d45e" />
    </svg>
  </div>
);

const Toolbar = () => (
  <div className="flex h-[82px] shrink-0">
    <button
      aria-label="Add track"
      className="relative flex w-[60px] items-center justify-center"
    >
      <svg
        viewBox="0 0 60 82"
        preserveAspectRatio="none"
        className="absolute inset-0 h-full w-full"
      >
        <path
          d="M1 82V74L18 12Q21 4 28 4H59V81H1z"
          fill="#51595f"
          stroke="#1c252b"
          strokeWidth="4"
        />
        <path
          d="M3 81V75L20 13Q23 5 29 5H58V80H3"
          fill="none"
          stroke="#646c72"
          strokeWidth="1.5"
        />
      </svg>
      <Plus className="relative mt-9 ml-[8px] size-4 text-[#dfe3e5]" />
    </button>
    <div className="mt-1 flex w-[162px] flex-col justify-between border-2 border-r-4 border-[#646c72] border-r-[#1c252b] bg-[#51595f] pt-1">
      <div className="flex items-center justify-between pr-2 pl-2">
        <button aria-label="Audio" className="text-[#7d8488]">
          <Wave className="h-7 w-[42px]" />
        </button>
        <button aria-label="Automation" className="text-[#dfe3e5]">
          <Automation className="h-[26px] w-[33px]" />
        </button>
        <button aria-label="Pattern" className="text-[#7d8488]">
          <Piano className="h-[22px] w-[31px]" />
        </button>
      </div>
      <div
        className={clsx(
          "flex items-center justify-between pr-[10px] pb-1 pl-[18px] text-[15px] leading-6 font-semibold text-[#d0d5d8]",
          TIGHT,
        )}
      >
        <label className="flex items-center gap-1">
          STEP
          <input
            type="checkbox"
            className="size-[22px] appearance-none rounded-[8px] border-[3px] border-[#b9bfc3]"
          />
        </label>
        <label className="flex items-center gap-[6px]">
          SLIDE
          <input
            type="radio"
            className="size-[18px] appearance-none rounded-full border-[3px] border-[#6d757b] bg-[radial-gradient(#dfe3e5_0_3px,#51595f_4px)]"
          />
        </label>
      </div>
    </div>
    <div className="flex min-w-0 flex-1 flex-col">
      <Overview />
      <Ruler />
    </div>
    <div className="flex w-[42px] flex-col gap-[2px] bg-[#1c252b] px-[2px] pt-1">
      <button
        aria-label="Zoom"
        className="flex h-[38px] items-center justify-center border-2 border-[#646c72] bg-[#51595f]"
      >
        <span className="h-[6px] w-1 bg-[#1c252b]" />
      </button>
      <StepButton d={UP} label="Scroll up" className="h-[38px]" />
    </div>
  </div>
);

function App() {
  const [muted, setMuted] = useState([]);

  const toggle = (name) =>
    setMuted((m) =>
      m.includes(name) ? m.filter((n) => n !== name) : [...m, name],
    );

  return (
    <div
      className={clsx(
        "flex h-screen w-full overflow-hidden border-b-2 border-black bg-[#41494f]",
        FONT,
      )}
    >
      <Picker />

      <main className="ml-[10px] flex min-w-0 flex-1 flex-col">
        <Toolbar />

        <div className="flex min-h-0 flex-1 border-t-2 border-l-2 border-[#1c252b]">
          <div className="flex w-[222px] shrink-0 flex-col overflow-hidden border-r-2 border-[#14202a] bg-[#1b272e]">
            {TRACKS.map((t) => (
              <TrackHead
                key={t.name}
                track={t}
                on={!muted.includes(t.name)}
                onToggle={() => toggle(t.name)}
              />
            ))}
            <div className="h-[2px] w-[196px] bg-[#66505a]" />
          </div>

          <div className="relative min-w-0 flex-1 overflow-hidden">
            <Grid />
            {TRACKS.map(({ name, Lane }) => (
              <div
                key={name}
                className="relative h-[72px] border-b-2 border-[#111e27]"
              >
                <Lane />
              </div>
            ))}
          </div>

          <div className="flex w-[42px] shrink-0 flex-col gap-[2px] bg-[#1c252b] px-[2px] pb-[2px]">
            <div className="h-[66px] shrink-0 border-2 border-[#646c72] bg-[#51595f]" />
            <div className="flex-1 bg-[repeating-linear-gradient(45deg,#343c44_0_2px,#3b434a_2px_4px)]" />
            <StepButton d={DOWN} label="Scroll down" className="h-[38px]" />
          </div>
        </div>
      </main>
    </div>
  );
}

export default App;
